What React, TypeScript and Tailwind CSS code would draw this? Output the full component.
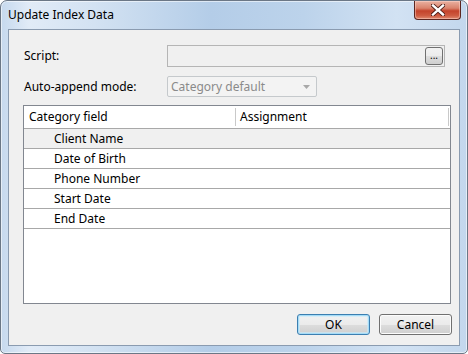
import React from 'react';

const FONT = { fontFamily: '"Noto Sans", "Open Sans", sans-serif' };

const ROWS = ['Client Name', 'Date of Birth', 'Phone Number', 'Start Date', 'End Date'];

function CloseButton() {
  return (
    <div className="w-[47px] h-[19px] mr-[6px] rounded-b-[4px] border border-t-0 border-[#5b2620] bg-[linear-gradient(to_bottom,#eab2a2_0%,#d9826c_40%,#c4432b_55%,#cd5a40_80%,#e08a70_100%)] flex items-center justify-center shadow-[inset_0_0_0_1px_rgba(255,220,210,0.45)]">
      <svg width="14" height="12" viewBox="0 0 14 12">
        <path d="M2 1.5 L12 10.5 M12 1.5 L2 10.5" stroke="#4a1a14" strokeWidth="4.2" strokeLinecap="square" />
        <path d="M2 1.5 L12 10.5 M12 1.5 L2 10.5" stroke="#ffffff" strokeWidth="2.4" strokeLinecap="square" />
      </svg>
    </div>
  );
}

function WinButton({ label, isDefault }: { label: string; isDefault?: boolean }) {
  return (
    <button
      className={`w-[73px] h-[21px] rounded-[3px] border text-[12px] text-black flex items-center justify-center bg-[linear-gradient(to_bottom,#f2f2f2_0%,#ebebeb_50%,#dddddd_51%,#cfcfcf_100%)] ${
        isDefault
          ? 'border-[#3c7fb1] shadow-[inset_0_0_0_1px_#a6dcf7,inset_0_0_0_2px_rgba(200,235,252,0.6)]'
          : 'border-[#707070] shadow-[inset_0_0_0_1px_#fcfcfc]'
      }`}
    >
      {label}
    </button>
  );
}

export default function App() {
  return (
    <div style={FONT} className="w-[468px] h-[354px] text-[12px] text-black">
      <div className="w-full h-full flex flex-col rounded-t-[7px] rounded-b-[5px] border border-[#6b7786] bg-[linear-gradient(to_right,#c6d9ee_0%,#e1ebf7_6%,#d3e2f2_20%,#b4cde8_45%,#bcd3eb_65%,#d2e2f3_85%,#c3d7ed_100%)] shadow-[inset_0_0_0_1px_rgba(255,255,255,0.55)]">
        {/* Title bar */}
        <div className="h-[28px] flex items-start justify-between">
          <span className="pl-[7px] pt-[5px] text-[12px] leading-[18px]">Update Index Data</span>
          <CloseButton />
        </div>

        {/* Client area */}
        <div className="flex-1 mx-[7px] mb-[7px] border border-[#8a9bb0] bg-[#f0f0f0] flex flex-col pl-[14px] pr-[8px] pt-[15px] pb-[10px]">
          <div className="flex items-center h-[22px]">
            <span className="w-[144px] pl-[1px]">Script:</span>
            <div className="w-[278px] h-[22px] border border-[#b5b5b5] bg-[#f0f0f0] flex items-center justify-end pr-[1px]">
              <div className="w-[18px] h-[18px] rounded-[3px] border border-[#707070] bg-[linear-gradient(to_bottom,#f2f2f2_0%,#ebebeb_50%,#dddddd_51%,#cfcfcf_100%)] flex items-center justify-center text-[10px] leading-none pb-[2px]">
                ...
              </div>
            </div>
          </div>

          <div className="flex items-center h-[21px] mt-[9px]">
            <span className="w-[144px] pl-[1px]">Auto-append mode:</span>
            <div className="w-[150px] h-[21px] rounded-[2px] border border-[#c5c9cc] bg-[#f3f3f3] flex items-center justify-between pl-[3px] pr-[6px]">
              <span className="text-[#8a8a8a]">Category default</span>
              <svg width="7" height="4" viewBox="0 0 7 4">
                <path d="M0 0 L7 0 L3.5 4 Z" fill="#a8a8a8" />
              </svg>
            </div>
          </div>

          {/* List */}
          <div className="mt-[8px] h-[199px] border border-[#828790] bg-white flex flex-col">
            <div className="h-[23px] flex border-b border-[#a8a8a8] bg-white">
              <div className="w-[212px] flex items-center pl-[5px] border-r border-[#c9c9c9] my-[2px]">Category field</div>
              <div className="flex-1 flex items-center pl-[4px]">Assignment</div>
              <div className="w-[2px] border-l border-[#c9c9c9] my-[2px]" />
            </div>
            {ROWS.map((r, i) => (
              <div
                key={r}
                className={`h-[20px] flex items-center pl-[30px] border-b border-[#a8a8a8] ${i === 0 ? 'bg-[#f0f0f0]' : 'bg-white'}`}
              >
                {r}
              </div>
            ))}
          </div>

          <div className="mt-[10px] flex justify-end gap-[9px] mr-[-1px]">
            <WinButton label="OK" isDefault />
            <WinButton label="Cancel" />
          </div>
        </div>
      </div>
    </div>
  );
}
